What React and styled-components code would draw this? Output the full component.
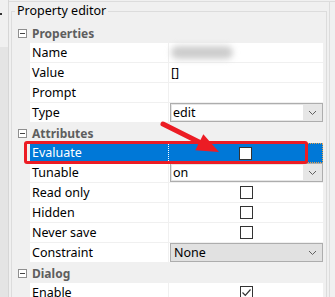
import React from "react"
import styled, { createGlobalStyle } from "styled-components"

const GlobalStyle = createGlobalStyle`
  body {
    margin: 0;
    background: #f0f0f0;
    font-family: "Noto Sans", "Open Sans", sans-serif;
    font-size: 12.5px;
    color: #000;
  }
`

const Window = styled.div`
  position: relative;
  display: flex;
  width: 335px;
  height: 297px;
  overflow: hidden;
  background: #f0f0f0;
`

const SidePane = styled.div`
  position: relative;
  width: 8px;
  border-right: 1px solid #d6d6d6;
  background: linear-gradient(#f0f0f0 0, #f0f0f0 47px, #e4e4e4 47px);

  &::before {
    content: "";
    position: absolute;
    left: 0;
    top: 13px;
    width: 2px;
    height: 2px;
    background: #333;
  }
`

const Main = styled.div`
  flex: 1;
  margin-top: 1px;
  border-top: 1px solid #dcdcdc;
  padding: 0 2px;
`

const RightStrip = styled.div`
  width: 5px;
  margin-top: 1px;
  border-top: 1px solid #dcdcdc;
  border-left: 1px solid #dcdcdc;
`

const GroupBox = styled.fieldset`
  margin: 1px 0 0;
  padding: 4px 3px 0;
  border: 1px solid #dcdcdc;
  min-width: 0;
`

const Legend = styled.legend`
  padding: 0 2px;
  line-height: 16px;
`

const Grid = styled.div`
  display: flex;
  flex-direction: column;
`

const CategoryRow = styled.div`
  display: grid;
  grid-template-columns: 15px 1fr;
  align-items: center;
  height: 20px;
`

const Toggle = styled.span`
  position: relative;
  box-sizing: border-box;
  width: 9px;
  height: 9px;
  margin-left: 3px;
  border: 1px solid #8f8f8f;
  background: #fff;

  &::after {
    content: "";
    position: absolute;
    left: 1px;
    right: 1px;
    top: 3px;
    height: 1px;
    background: #444;
  }
`

const CategoryTitle = styled.span`
  padding-left: 2px;
  font-weight: bold;
  font-size: 12px;
  color: #5e5e5e;
`

const Row = styled.div`
  display: grid;
  grid-template-columns: 15px 139px 1fr;
  height: 20px;
`

const LabelCell = styled.div`
  grid-column: 2;
  box-sizing: border-box;
  padding-left: 2px;
  line-height: 19px;
  white-space: nowrap;
  background: ${p => (p.$selected ? "#0078d7" : "#fff")};
  color: ${p => (p.$selected ? "#fff" : "#000")};
  border-bottom: 1px solid #f0f0f0;
  border-right: 1px ${p => (p.$selected ? "dotted #fff" : "solid #f0f0f0")};
`

const ValueCell = styled.div`
  box-sizing: border-box;
  display: flex;
  align-items: center;
  justify-content: ${p => (p.$center ? "center" : "flex-start")};
  padding-left: ${p => (p.$text ? "2px" : "0")};
  background: ${p => (p.$selected ? "#0078d7" : "#fff")};
  border-bottom: 1px solid #f0f0f0;
  ${p => p.$selected && "border: 1px dotted #e8a24a; border-left: none;"}
`

const Blurred = styled.div`
  width: 62px;
  height: 13px;
  margin-left: 2px;
  border-radius: 7px;
  background: #cdcdcd;
  filter: blur(3px);
`

const Combo = styled.div`
  box-sizing: border-box;
  display: flex;
  align-items: center;
  flex: 1;
  height: 19px;
  margin-left: 1px;
  border: 1px solid #adadad;
  background: ${p => (p.$list ? "#e1e1e1" : "#e6e6e6")};
`

const ComboField = styled.span`
  flex: 1;
  align-self: stretch;
  margin: 1px 0 1px 1px;
  padding-left: ${p => (p.$list ? "2px" : "1px")};
  line-height: 15px;
  background: ${p => (p.$list ? "transparent" : "#fff")};
`

const Chevron = styled.svg`
  width: 19px;
  flex: none;
`

const Check = styled.span`
  box-sizing: border-box;
  display: flex;
  width: 13px;
  height: 13px;
  border: 1px solid #333;
  background: #fff;
`

const Highlight = styled.div`
  position: absolute;
  left: 24px;
  top: 141px;
  width: 284px;
  height: 23px;
  box-sizing: border-box;
  border: 3px solid #ec1c24;
  border-radius: 3px;
  pointer-events: none;
`

const Overlay = styled.svg`
  position: absolute;
  left: 0;
  top: 0;
  pointer-events: none;
`

const ComboBox = ({ value, list }) => (
  <Combo $list={list}>
    <ComboField $list={list}>{value}</ComboField>
    <Chevron viewBox="0 0 19 17" height="17">
      <path d="M6 7l3.5 3.5L13 7" fill="none" stroke="#606060" strokeWidth="1" />
    </Chevron>
  </Combo>
)

const CheckBox = ({ checked }) => (
  <Check>
    {checked && (
      <svg viewBox="0 0 11 11" width="11" height="11">
        <path d="M1.5 5.5l2.8 2.8L9.5 2.5" fill="none" stroke="#333" strokeWidth="1.2" />
      </svg>
    )}
  </Check>
)

const Category = ({ title }) => (
  <CategoryRow>
    <Toggle />
    <CategoryTitle>{title}</CategoryTitle>
  </CategoryRow>
)

const Property = ({ label, selected, children, center, text }) => (
  <Row>
    <LabelCell $selected={selected}>{label}</LabelCell>
    <ValueCell $selected={selected} $center={center} $text={text}>
      {children}
    </ValueCell>
  </Row>
)

export default function App() {
  return (
    <>
      <GlobalStyle />
      <Window>
        <SidePane />
        <Main>
          <GroupBox>
            <Legend>Property editor</Legend>
            <Grid>
              <Category title="Properties" />
              <Property label="Name">
                <Blurred />
              </Property>
              <Property label="Value" text>[]</Property>
              <Property label="Prompt" />
              <Property label="Type">
                <ComboBox value="edit" />
              </Property>
              <Category title="Attributes" />
              <Property label="Evaluate" selected center>
                <CheckBox />
              </Property>
              <Property label="Tunable">
                <ComboBox value="on" />
              </Property>
              <Property label="Read only" center>
                <CheckBox />
              </Property>
              <Property label="Hidden" center>
                <CheckBox />
              </Property>
              <Property label="Never save" center>
                <CheckBox />
              </Property>
              <Property label="Constraint">
                <ComboBox value="None" list />
              </Property>
              <Category title="Dialog" />
              <Property label="Enable" center>
                <CheckBox checked />
              </Property>
            </Grid>
          </GroupBox>
        </Main>
        <RightStrip />
        <Highlight />
        <Overlay width="335" height="297" viewBox="0 0 335 297">
          <line x1="163" y1="124" x2="201" y2="143" stroke="#ec1c24" strokeWidth="5" strokeLinecap="round" />
          <polygon points="219,152 203.3,134.2 195.3,150.2" fill="#ec1c24" />
        </Overlay>
      </Window>
    </>
  )
}
